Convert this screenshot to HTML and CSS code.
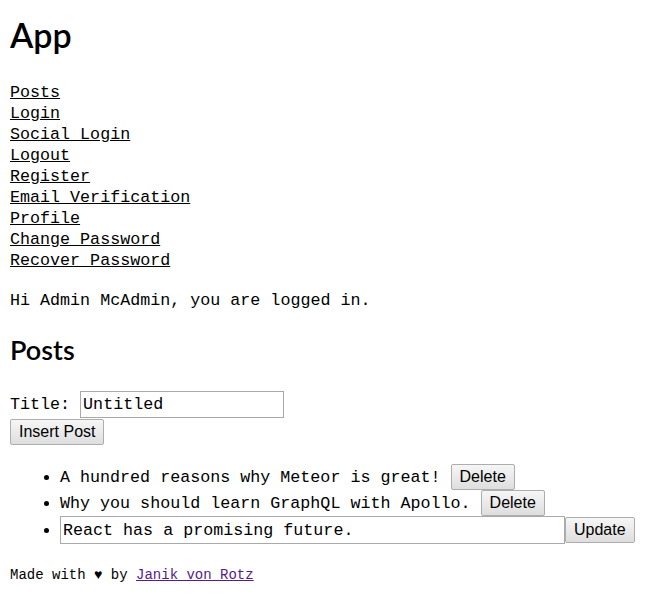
FILE: index.html
```html
<!DOCTYPE html>
<html>
<head>
<meta charset="utf-8">
<link rel="stylesheet" href="styles.css">
</head>
<body>
<h1 class="app-title">App</h1>
<nav class="nav">
  <a href="#">Posts</a>
  <a href="#">Login</a>
  <a href="#">Social Login</a>
  <a href="#">Logout</a>
  <a href="#">Register</a>
  <a href="#">Email Verification</a>
  <a href="#">Profile</a>
  <a href="#">Change Password</a>
  <a href="#">Recover Password</a>
</nav>
<p class="greeting">Hi Admin McAdmin, you are logged in.</p>
<h2 class="section-title">Posts</h2>
<form class="post-form">
  <label class="field">Title: <input class="text-input title-input" type="text" value="Untitled"></label>
  <div class="form-actions"><button class="btn" type="button">Insert Post</button></div>
</form>
<ul class="post-list">
  <li>A hundred reasons why Meteor is great! <button class="btn" type="button">Delete</button></li>
  <li>Why you should learn GraphQL with Apollo. <button class="btn" type="button">Delete</button></li>
  <li><input class="text-input edit-input" type="text" value="React has a promising future."><button class="btn" type="button">Update</button></li>
</ul>
<footer class="footer">Made with ♥ by <a class="author" href="#">Janik von Rotz</a></footer>
</body>
</html>
```
FILE: styles.css
```css
body {
  margin: 10px;
  font-family: "Liberation Mono", "DejaVu Sans Mono", monospace;
  font-size: 16.7px;
  line-height: 21px;
  color: #000;
  background: #fff;
}
.app-title {
  font-family: Lato, "Open Sans", sans-serif;
  font-weight: 600;
  font-size: 34px;
  line-height: 46px;
  margin: 2px 0 24px;
}
.nav a {
  display: block;
  color: #000;
  text-decoration: underline;
  width: max-content;
}
.greeting {
  margin: 19px 0 22px;
}
.section-title {
  font-family: Lato, "Open Sans", sans-serif;
  font-weight: 600;
  font-size: 27px;
  line-height: 34px;
  margin: 0 0 24px;
}
.post-form {
  margin: 0;
}
.form-actions {
  margin-top: 1px;
}
.text-input {
  font-family: "Liberation Mono", "DejaVu Sans Mono", monospace;
  font-size: 16.7px;
  border: 1px solid #a9a9a9;
  padding: 2px 2px;
  height: 27px;
  box-sizing: border-box;
  margin: 0;
}
.title-input {
  width: 204px;
}
.btn {
  font-family: "Liberation Sans", Arial, sans-serif;
  font-size: 16px;
  line-height: 18px;
  padding: 3px 8px;
  border: 1px solid #adadad;
  border-radius: 2px;
  background: linear-gradient(#f6f6f6, #dedede);
  color: #000;
  margin: 0;
}
.post-list {
  margin: 19px 0 21px;
  padding-left: 50px;
}
.post-list li {
  margin: 0;
  line-height: 25px;
}
.edit-input {
  width: 505px;
  height: 28px;
}
.footer {
  font-size: 14px;
}
.author {
  color: #551a8b;
}
```
